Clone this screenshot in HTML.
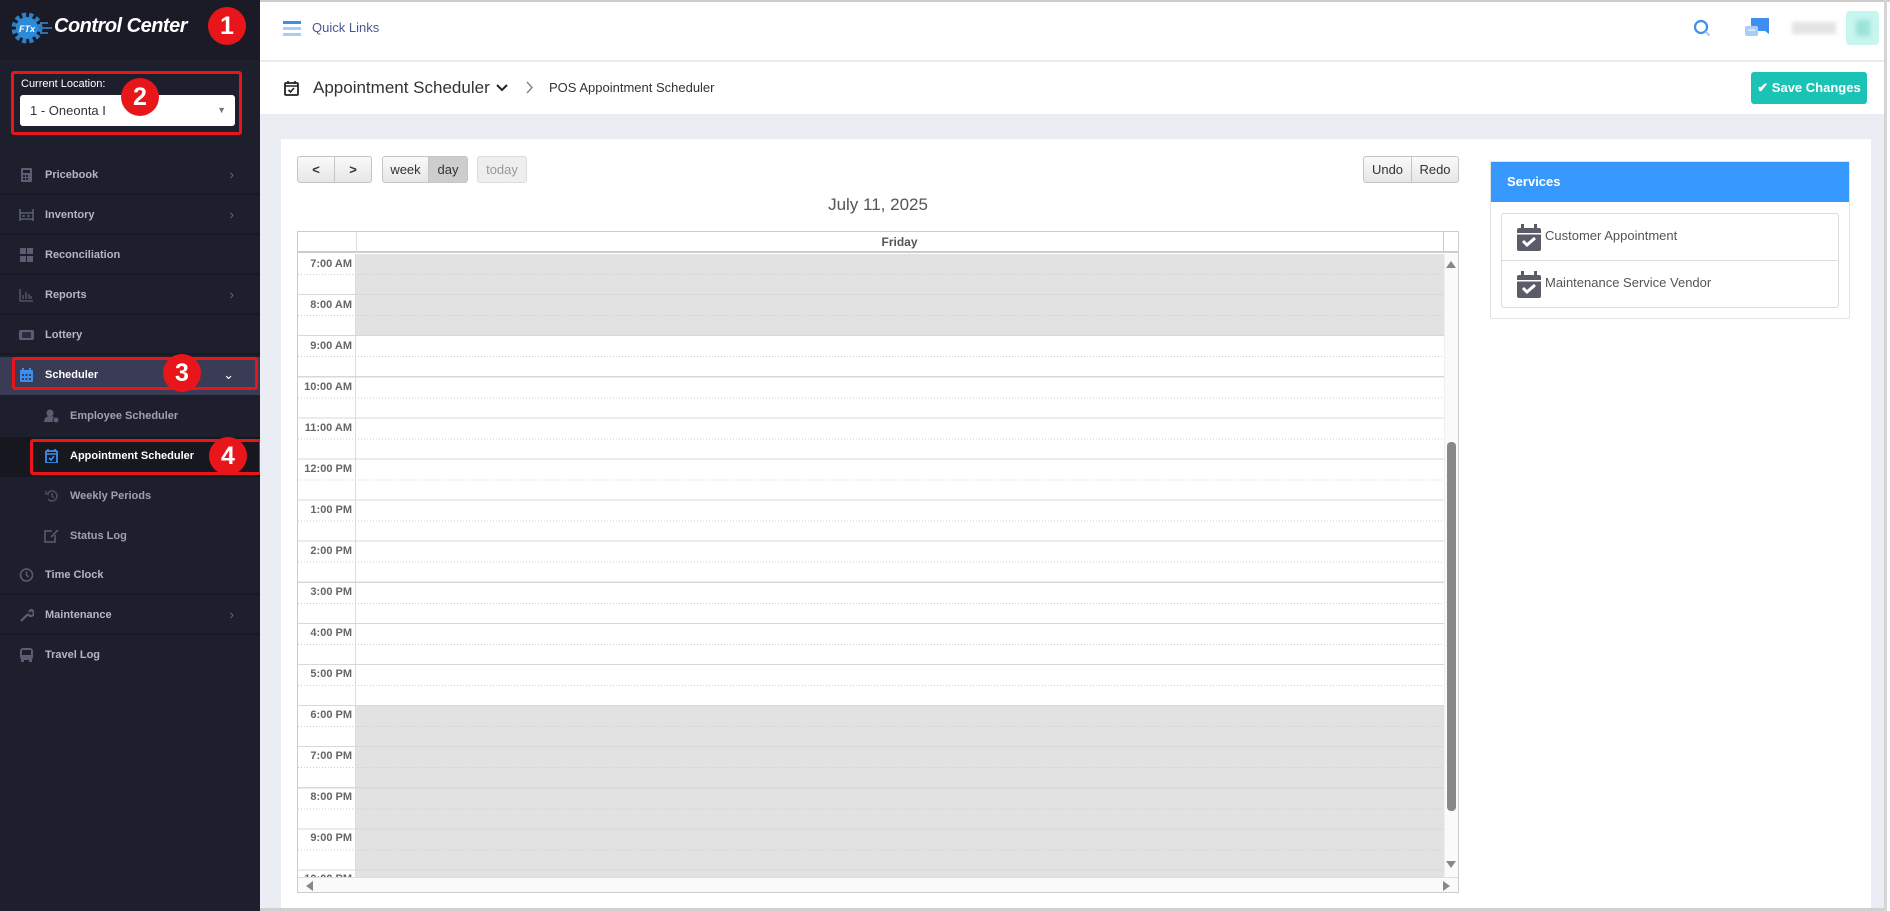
<!DOCTYPE html>
<html><head><meta charset="utf-8"><style>
*{box-sizing:border-box;margin:0;padding:0}
body{width:1890px;height:911px;overflow:hidden;background:#fff;font-family:"Liberation Sans",Arial,sans-serif;position:relative}
.a{position:absolute}
#sb{left:0;top:0;width:260px;height:911px;background:#1e1f2d}
.it{position:absolute;left:0;width:260px;height:40px;color:#b4b6c6;font-size:11px;font-weight:bold;line-height:40px;padding-left:45px;border-bottom:2px solid #181925}
.it .ic{position:absolute;left:19px;top:13px;width:15px;height:14px}
.it .ch{position:absolute;right:26px;top:0;color:#666a80;font-weight:normal;font-size:13px}
.sub{position:absolute;left:0;width:260px;height:40px;color:#9ea1b4;font-size:11px;font-weight:bold;line-height:40px;padding-left:70px}
.sub .ic{position:absolute;left:44px;top:13px;width:15px;height:14px}
.red{position:absolute;border:3px solid #e8161b;border-radius:3px}
.num{position:absolute;width:38px;height:38px;border-radius:50%;background:#e8161b;color:#fff;font-weight:bold;font-size:25px;text-align:center;line-height:38px}
.btn{position:absolute;top:156px;height:27px;border:1px solid #c5c5c5;border-radius:3px;background:linear-gradient(#fafafa,#e6e6e6);font-size:13px;color:#333;line-height:25px;text-align:center}
.tl{position:absolute;left:0;width:58px;text-align:right;padding-right:4px;font-size:11px;font-weight:bold;color:#666}
</style></head><body>
<div class="a" style="left:0;top:0;width:1890px;height:2px;background:#ccc"></div>
<div class="a" id="sb">
 <div class="a" style="left:0;top:0;width:260px;height:60px;background:#1a1b27"></div>
 <svg class="a" style="left:10px;top:11px" width="44" height="34" viewBox="0 0 44 34"><circle cx="17" cy="17" r="13" fill="none" stroke="#2d7fc6" stroke-width="5" stroke-dasharray="4 3"/><circle cx="17" cy="17" r="11" fill="#2d8ad9"/><text x="9" y="21" font-size="9" font-style="italic" font-weight="bold" fill="#fff" font-family="Liberation Sans">FTx</text><path d="M30 12h8M30 22h8M32 17h10" stroke="#3a8ad0" stroke-width="1.5"/></svg>
 <div class="a" style="left:54px;top:15px;color:#fff;font-size:20px;font-style:italic;font-weight:bold;letter-spacing:-0.5px">Control Center</div>
 <div class="num" style="left:208px;top:7px">1</div>
 <div class="red" style="left:11px;top:71px;width:231px;height:64px"></div>
 <div class="a" style="left:21px;top:78px;color:#fff;font-size:11px">Current Location:</div>
 <div class="a" style="left:20px;top:95px;width:215px;height:31px;background:#fff;border-radius:3px;font-size:13px;color:#333;line-height:31px;padding-left:10px">1 - Oneonta I<span style="position:absolute;right:9px;top:0;color:#777;font-size:9px">▼</span></div>
 <div class="num" style="left:121px;top:78px">2</div>

 <div class="it" style="top:155px"><svg class="ic" viewBox="0 0 15 14"><rect x="2" y="0" width="11" height="14" rx="1" fill="#5a5d74"/><rect x="4" y="2" width="7" height="3" fill="#1e1f2d"/><g fill="#1e1f2d"><rect x="4" y="7" width="2" height="2"/><rect x="7" y="7" width="2" height="2"/><rect x="4" y="10" width="2" height="2"/><rect x="7" y="10" width="2" height="2"/></g></svg>Pricebook<span class="ch">›</span></div>
 <div class="it" style="top:195px"><svg class="ic" viewBox="0 0 15 14"><path d="M1 1v12M14 1v12M1 5h13M1 11h13M3 8h3M8 8h3" stroke="#5a5d74" stroke-width="1.6"/></svg>Inventory<span class="ch">›</span></div>
 <div class="it" style="top:235px"><svg class="ic" viewBox="0 0 15 14"><g fill="#5a5d74"><rect x="1" y="0" width="6" height="6"/><rect x="8" y="0" width="6" height="6"/><rect x="1" y="8" width="6" height="6"/><rect x="8" y="8" width="6" height="6"/></g></svg>Reconciliation</div>
 <div class="it" style="top:275px"><svg class="ic" viewBox="0 0 15 14"><path d="M1 1v12h13M4 11V7M7 11V4M10 11V6M12 11V8" stroke="#5a5d74" stroke-width="1.3" fill="none"/></svg>Reports<span class="ch">›</span></div>
 <div class="it" style="top:315px"><svg class="ic" viewBox="0 0 15 14"><rect x="0" y="2" width="15" height="10" rx="2" fill="#5a5d74"/><rect x="3" y="4" width="9" height="6" fill="#2a2b3c"/></svg>Lottery</div>
 <div class="a" style="left:0;top:357px;width:260px;height:38px;background:#3a3b55"></div>
 <div class="it" style="top:355px;color:#fff;border:none"><svg class="ic" viewBox="0 0 15 14"><rect x="1" y="2" width="13" height="12" rx="1" fill="#3d8ef0"/><rect x="3" y="0" width="2" height="3" fill="#3d8ef0"/><rect x="10" y="0" width="2" height="3" fill="#3d8ef0"/><g fill="#3a3b55"><rect x="3" y="6" width="2" height="2"/><rect x="6.5" y="6" width="2" height="2"/><rect x="10" y="6" width="2" height="2"/><rect x="3" y="10" width="2" height="2"/><rect x="6.5" y="10" width="2" height="2"/><rect x="10" y="10" width="2" height="2"/></g></svg>Scheduler<span class="ch" style="color:#fff">⌄</span></div>
 <div class="red" style="left:12px;top:357px;width:246px;height:33px"></div>
 <div class="num" style="left:163px;top:354px">3</div>
 <div class="sub" style="top:396px"><svg class="ic" viewBox="0 0 15 14"><circle cx="6" cy="4" r="3.5" fill="#5a5d74"/><path d="M0 13c0-4 3-6 6-6s5 1 6 3v3z" fill="#5a5d74"/><circle cx="12" cy="11" r="3" fill="#5a5d74" stroke="#1e1f2d"/></svg>Employee Scheduler</div>
 <div class="a" style="left:0;top:437px;width:260px;height:40px;background:#16171f"></div>
 <div class="sub" style="top:436px;color:#fff"><svg class="ic" viewBox="0 0 15 14"><rect x="2" y="2" width="11" height="12" rx="1" fill="none" stroke="#3d8ef0" stroke-width="1.8"/><path d="M4 0v3M11 0v3M2 5h11M5 9l2 2 3-4" stroke="#3d8ef0" stroke-width="1.6" fill="none"/></svg>Appointment Scheduler</div>
 <div class="red" style="left:30px;top:439px;width:232px;height:36px"></div>
 <div class="num" style="left:209px;top:437px">4</div>
 <div class="sub" style="top:476px"><svg class="ic" viewBox="0 0 15 14"><path d="M4 4a5 5 0 1 1 0 6M2 2v3h3M8 4v3l2 2" stroke="#4a4d62" stroke-width="1.5" fill="none"/></svg>Weekly Periods</div>
 <div class="sub" style="top:516px"><svg class="ic" viewBox="0 0 15 14"><path d="M11 6v7H1V2h7M7 8l7-7" stroke="#5a5d74" stroke-width="1.5" fill="none"/></svg>Status Log</div>
 <div class="it" style="top:555px"><svg class="ic" viewBox="0 0 15 14"><circle cx="7.5" cy="7" r="6" stroke="#5a5d74" stroke-width="1.5" fill="none"/><path d="M7.5 3.5V7l2 2" stroke="#5a5d74" stroke-width="1.5" fill="none"/></svg>Time Clock</div>
 <div class="it" style="top:595px"><svg class="ic" viewBox="0 0 15 14"><path d="M2 13l7-7M9 6a3 3 0 1 0 3-4l-2 2" stroke="#5a5d74" stroke-width="2.2" fill="none"/></svg>Maintenance<span class="ch">›</span></div>
 <div class="it" style="top:635px;border:none"><svg class="ic" viewBox="0 0 15 14"><rect x="1" y="0" width="13" height="12" rx="3" fill="#5a5d74"/><rect x="3" y="2" width="9" height="5" fill="#1e1f2d"/><rect x="2" y="11" width="3" height="3" fill="#5a5d74"/><rect x="10" y="11" width="3" height="3" fill="#5a5d74"/></svg>Travel Log</div>
</div>

<svg class="a" style="left:283px;top:21px" width="18" height="15"><rect y="0" width="18" height="3" fill="#3d8ef0"/><rect y="6" width="18" height="3" fill="#a9cdf7"/><rect y="12" width="18" height="3" fill="#a9cdf7"/></svg>
<div class="a" style="left:312px;top:20px;font-size:13px;color:#4a5a90">Quick Links</div>
<svg class="a" style="left:1693px;top:19px" width="20" height="20"><circle cx="8" cy="8" r="6" stroke="#3d8ef0" stroke-width="2.2" fill="none"/><path d="M12.5 12.5l4 4" stroke="#a9cdf7" stroke-width="2.2"/></svg>
<svg class="a" style="left:1745px;top:18px" width="25" height="21"><path d="M6 0h18v16l-4-3H6z" fill="#3d8ef0"/><rect x="0" y="8" width="13" height="10" rx="2" fill="#a9cdf7"/><path d="M3 12h7" stroke="#fff"/></svg>
<div class="a" style="left:1792px;top:22px;width:44px;height:12px;background:#e3e3e3;filter:blur(2px)"></div>
<div class="a" style="left:1846px;top:11px;width:33px;height:34px;background:#c7f5ef;border-radius:4px"><div style="margin:9px auto;width:14px;height:16px;background:#9be3d7;filter:blur(2px)"></div></div>
<div class="a" style="left:260px;top:60px;width:1625px;height:2px;background:#ececec"></div>
<div class="a" style="left:1884px;top:0;width:3px;height:911px;background:#d5d5d5"></div>

<svg class="a" style="left:284px;top:80px" width="15" height="16" viewBox="0 0 15 16"><rect x="1" y="3" width="13" height="12" rx="1" fill="none" stroke="#222" stroke-width="1.8"/><path d="M4 1v3M11 1v3M1 6h13M4.5 10l2 2 3.5-4" stroke="#222" stroke-width="1.6" fill="none"/></svg>
<div class="a" style="left:313px;top:78px;font-size:17px;color:#333">Appointment Scheduler</div>
<svg class="a" style="left:496px;top:84px" width="12" height="8"><path d="M1 1l5 5 5-5" stroke="#222" stroke-width="2" fill="none"/></svg>
<svg class="a" style="left:526px;top:81px" width="8" height="13"><path d="M1 1l5 5.5-5 5.5" stroke="#888" stroke-width="1.5" fill="none"/></svg>
<div class="a" style="left:549px;top:80px;font-size:13px;color:#333">POS Appointment Scheduler</div>
<div class="a" style="left:1751px;top:72px;width:116px;height:32px;background:#1bc3b6;border-radius:3px;color:#fff;font-size:13px;font-weight:bold;line-height:32px;text-align:center">✔ Save Changes</div>

<div class="a" style="left:260px;top:114px;width:1624px;height:797px;background:#ebedf5"></div>
<div class="a" style="left:281px;top:139px;width:1590px;height:770px;background:#fff"></div>
<div class="a" style="left:260px;top:908px;width:1624px;height:3px;background:#d0d0d0"></div>

<div class="btn" style="left:297px;width:38px;border-radius:3px 0 0 3px;font-weight:bold">&lt;</div>
<div class="btn" style="left:334px;width:38px;border-radius:0 3px 3px 0;font-weight:bold">&gt;</div>
<div class="btn" style="left:382px;width:47px;border-radius:3px 0 0 3px">week</div>
<div class="btn" style="left:428px;width:40px;border-radius:0 3px 3px 0;background:#cdcdcd">day</div>
<div class="btn" style="left:477px;width:50px;color:#999;background:#eee;border-color:#ddd">today</div>
<div class="btn" style="left:1363px;width:49px;border-radius:3px 0 0 3px">Undo</div>
<div class="btn" style="left:1411px;width:48px;border-radius:0 3px 3px 0">Redo</div>
<div class="a" style="left:297px;top:195px;width:1162px;text-align:center;font-size:17px;color:#555">July 11, 2025</div>

<div class="a" style="left:297px;top:231px;width:1162px;height:662px;border:1px solid #ccc;overflow:hidden;background:#fff">
 <div class="a" style="left:0;top:0;width:1160px;height:21px;border-bottom:2px solid #ccc"></div>
 <div class="a" style="left:58px;top:0;width:1px;height:21px;background:#ddd"></div>
 <div class="a" style="left:1145px;top:0;width:1px;height:21px;background:#ccc"></div>
 <div class="a" style="left:58px;top:3px;width:1087px;text-align:center;font-size:12px;font-weight:bold;color:#555">Friday</div>
 <div class="a" style="left:0;top:22px;width:1146px;height:623px;overflow:hidden">
  <div class="a" style="left:58px;top:0;width:1088px;height:82px;background:#e2e2e2"></div>
  <div class="a" style="left:58px;top:452px;width:1088px;height:200px;background:#e2e2e2"></div>
  <div class="a" style="left:57px;top:0;width:1px;height:640px;background:#ddd"></div>
  <div class="a" style="left:0;top:0;width:1146px;height:640px;background:repeating-linear-gradient(to bottom,transparent 0,transparent 40px,#d8d8d8 40px,#d8d8d8 41.1px)"></div>
  <div class="a" style="left:0;top:20px;width:1146px;height:640px;background-image:repeating-linear-gradient(to right,#ccc 0,#ccc 1px,transparent 1px,transparent 3px);-webkit-mask:repeating-linear-gradient(to bottom,#000 0,#000 1px,transparent 1px,transparent 41.1px);mask:repeating-linear-gradient(to bottom,#000 0,#000 1px,transparent 1px,transparent 41.1px)"></div>
  <div class="tl" style="top:4px">7:00 AM</div>
  <div class="tl" style="top:45px">8:00 AM</div>
  <div class="tl" style="top:86px">9:00 AM</div>
  <div class="tl" style="top:127px">10:00 AM</div>
  <div class="tl" style="top:168px">11:00 AM</div>
  <div class="tl" style="top:209px">12:00 PM</div>
  <div class="tl" style="top:250px">1:00 PM</div>
  <div class="tl" style="top:291px">2:00 PM</div>
  <div class="tl" style="top:332px">3:00 PM</div>
  <div class="tl" style="top:373px">4:00 PM</div>
  <div class="tl" style="top:414px">5:00 PM</div>
  <div class="tl" style="top:455px">6:00 PM</div>
  <div class="tl" style="top:496px">7:00 PM</div>
  <div class="tl" style="top:537px">8:00 PM</div>
  <div class="tl" style="top:578px">9:00 PM</div>
  <div class="tl" style="top:619px">10:00 PM</div>
 </div>
 <div class="a" style="left:1146px;top:22px;width:15px;height:623px;background:#fafafa;border-left:1px solid #eee"></div>
 <div class="a" style="left:1148px;top:29px;width:0;height:0;border:5px solid transparent;border-bottom:7px solid #888;border-top:0"></div>
 <div class="a" style="left:1149px;top:210px;width:9px;height:369px;background:#888;border-radius:4px"></div>
 <div class="a" style="left:1148px;top:629px;width:0;height:0;border:5px solid transparent;border-top:7px solid #888;border-bottom:0"></div>
 <div class="a" style="left:0;top:645px;width:1160px;height:16px;background:#fafafa;border-top:1px solid #ddd"></div>
 <div class="a" style="left:8px;top:649px;width:0;height:0;border:5px solid transparent;border-right:7px solid #888;border-left:0"></div>
 <div class="a" style="left:1145px;top:649px;width:0;height:0;border:5px solid transparent;border-left:7px solid #888;border-right:0"></div>
</div>

<div class="a" style="left:1490px;top:161px;width:360px;height:158px;border:1px solid #e3e3e3;border-radius:2px;background:#fff">
 <div style="height:40px;background:#3799fd;color:#fff;font-weight:bold;font-size:13px;line-height:40px;padding-left:16px">Services</div>
 <div class="a" style="left:10px;top:51px;width:338px;height:95px;border:1px solid #ddd;border-radius:3px">
  <div style="height:47px;border-bottom:1px solid #ddd;position:relative;font-size:13px;color:#555;line-height:44px;padding-left:43px">
   <svg class="a" style="left:15px;top:10px" width="24" height="27" viewBox="0 0 24 27"><rect x="0" y="4" width="24" height="23" rx="2" fill="#5a5d69"/><rect x="4" y="0" width="3" height="6" fill="#5a5d69"/><rect x="17" y="0" width="3" height="6" fill="#5a5d69"/><rect x="0" y="9" width="24" height="1.5" fill="#fff"/><path d="M6 17l4 4 8-7" stroke="#fff" stroke-width="3" fill="none"/></svg>Customer Appointment</div>
  <div style="height:47px;position:relative;font-size:13px;color:#555;line-height:44px;padding-left:43px">
   <svg class="a" style="left:15px;top:10px" width="24" height="27" viewBox="0 0 24 27"><rect x="0" y="4" width="24" height="23" rx="2" fill="#5a5d69"/><rect x="4" y="0" width="3" height="6" fill="#5a5d69"/><rect x="17" y="0" width="3" height="6" fill="#5a5d69"/><rect x="0" y="9" width="24" height="1.5" fill="#fff"/><path d="M6 17l4 4 8-7" stroke="#fff" stroke-width="3" fill="none"/></svg>Maintenance Service Vendor</div>
 </div>
</div>
</body></html>
